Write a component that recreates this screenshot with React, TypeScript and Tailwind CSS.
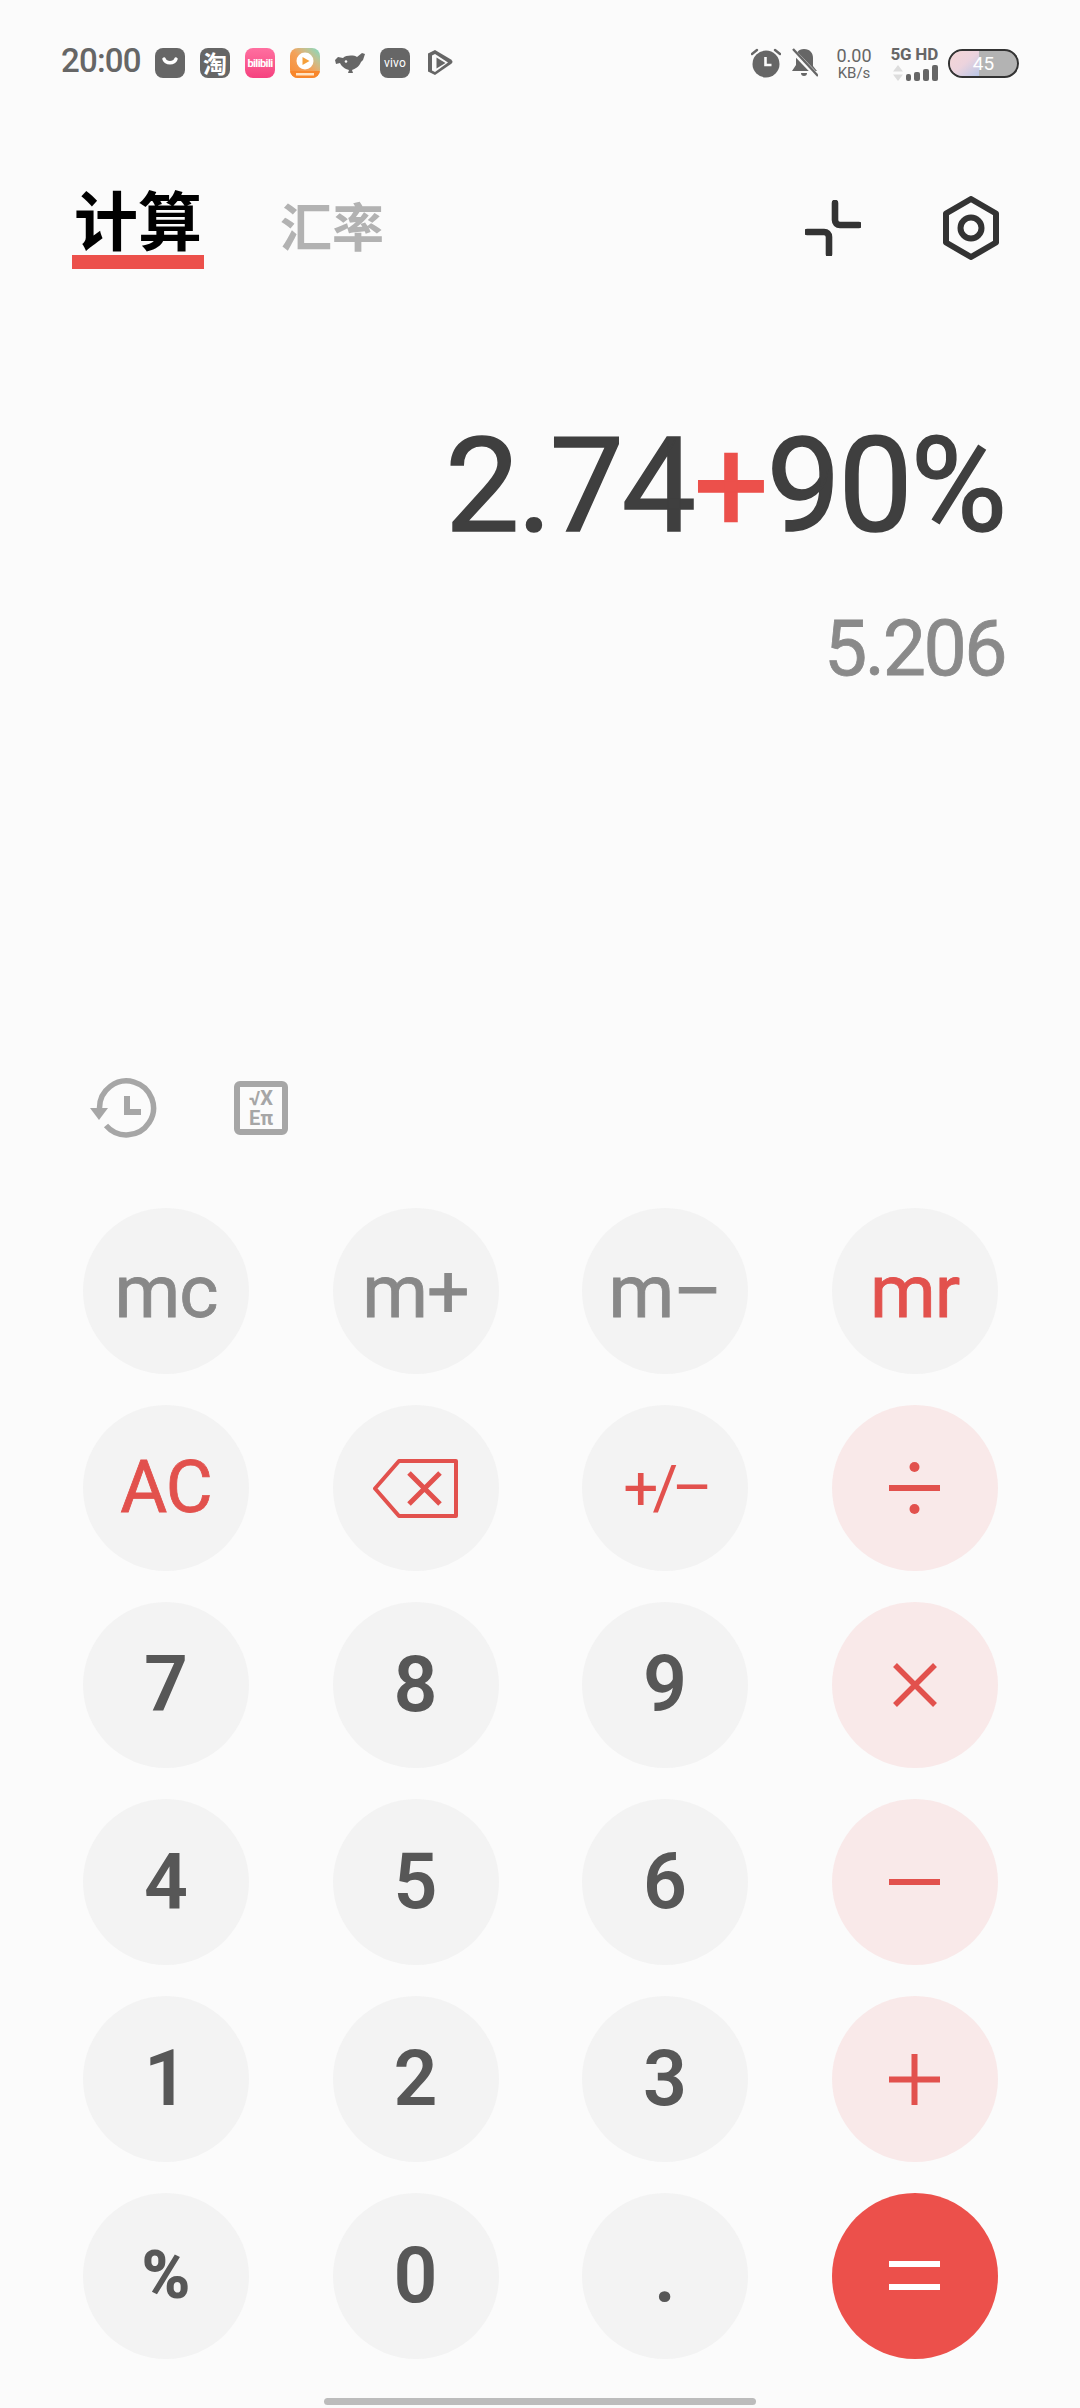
import React from 'react';

const SANS = 'font-["Roboto","Liberation_Sans",sans-serif]';

const AppSquare: React.FC<{ children?: React.ReactNode; className?: string }> = ({ children, className = 'bg-[#666666]' }) => (
  <div className={`relative w-[30px] h-[30px] rounded-[8px] flex items-center justify-center overflow-hidden text-white ${className}`}>
    {children}
  </div>
);

const StatusLeft = () => (
  <div className="flex items-center">
    <div className="w-[94px] shrink-0 -mt-[4px]">
      <span className={`${SANS} text-[33px] leading-[40px] font-medium text-[#666666] whitespace-nowrap tracking-[-0.8px]`}>20:00</span>
    </div>
    <div className="flex items-center gap-[15px]">
      <AppSquare>
        <svg width="30" height="30" viewBox="0 0 30 30">
          <path d="M9 11c2 5 10 5 12 0" fill="none" stroke="#fff" strokeWidth="3.4" strokeLinecap="round" />
        </svg>
      </AppSquare>
      <AppSquare>
        <span className='font-["Noto_Sans_CJK_SC",sans-serif] text-[24px] leading-none font-bold'>淘</span>
      </AppSquare>
      <AppSquare className="bg-gradient-to-b from-[#ff6fa0] to-[#f5407f]">
        <span className={`${SANS} text-[11px] leading-none font-bold tracking-[-0.6px]`}>bilibili</span>
      </AppSquare>
      <AppSquare className="bg-gradient-to-tr from-[#f98a2e] via-[#f3a25a] to-[#6fdcc4]">
        <svg width="30" height="30" viewBox="0 0 30 30">
          <rect x="0" y="23" width="30" height="7" fill="#f8872c" />
          <circle cx="15" cy="13" r="8.5" fill="#fff" />
          <path d="M12.5 9l7 4-7 4z" fill="#f5a03c" />
          <rect x="6" y="25" width="18" height="2.5" fill="#ffe3c4" />
        </svg>
      </AppSquare>
      <svg width="30" height="30" viewBox="0 0 30 30">
        <path d="M0 12L3 9l5 1c3-3 11-3 14-1l5-4 3 1-2 6-2 2c-2 5-6 7-9 8l1 3h-5l1-3c-4-1-8-4-9-7l-4 1z" fill="#666666" />
        <circle cx="11" cy="13.500" r="1.3" fill="#fbfbfb" />
      </svg>
      <AppSquare>
        <span className={`${SANS} text-[12px] leading-none font-normal tracking-[0.2px]`}>vivo</span>
      </AppSquare>
      <svg width="30" height="30" viewBox="0 0 30 30">
        <path d="M3 5.5 10 2l16 9.5c2 1.5 2 3 0 4.500L10 27l-7-3.5z" fill="#666666" />
        <path d="M7 7.5v15l3 1.5 13-9.5L10 6z" fill="#fbfbfb" />
        <path d="M11.5 9.5l9 5.5-9 5.500z" fill="#666666" />
      </svg>
    </div>
  </div>
);

const StatusRight = () => (
  <div className="flex items-center">
    <svg width="30" height="30" viewBox="0 0 30 30">
      <path d="M1 6l5-4M29 6l-5-4" stroke="#666666" strokeWidth="2.4" strokeLinecap="round" />
      <circle cx="15" cy="16" r="13.5" fill="#666666" />
      <path d="M14.5 9v8h6" fill="none" stroke="#fbfbfb" strokeWidth="2.6" />
    </svg>
    <svg className="ml-[10px]" width="27" height="30" viewBox="0 0 27 30">
      <path d="M13 1c6 0 9 4 9 9v8l4 5H1l4-6v-7c0-5 2-9 8-9z" fill="#666666" />
      <path d="M10 25h6a3 3 0 0 1-6 0z" fill="#666666" />
      <path d="M1 2l25 26" stroke="#fbfbfb" strokeWidth="5" />
      <path d="M2 1l25 27" stroke="#666666" strokeWidth="2.4" />
    </svg>
    <div className={`${SANS} ml-[17px] w-[38px] flex flex-col items-center text-[#666666]`}>
      <span className="text-[18px] leading-[19px]">0.00</span>
      <span className="text-[15px] leading-[16px]">KB/s</span>
    </div>
    <div className="ml-[17px] w-[48px] flex flex-col items-end">
      <span className={`${SANS} text-[17px] leading-[16px] font-bold text-[#666666] whitespace-nowrap tracking-[-0.2px]`}>5G HD</span>
      <div className="mt-[3px] flex items-end gap-[3px]">
        <svg width="10" height="16" viewBox="0 0 10 16">
          <path d="M5 0l5 6.5H0zM5 16l5-6.5H0z" fill="#dddddd" />
        </svg>
        <div className="w-[5px] h-[7px] rounded-[2px] bg-[#666666]" />
        <div className="w-[6px] h-[9px] rounded-[2px] bg-[#666666]" />
        <div className="w-[6px] h-[12px] rounded-[2px] bg-[#666666]" />
        <div className="w-[6px] h-[16px] rounded-[2px] bg-[#666666]" />
      </div>
    </div>
    <div className="relative ml-[10px] w-[71px] h-[29px] rounded-full border-[2.5px] border-[#333333] overflow-hidden flex bg-[#b3b3b3]">
      <div className="w-[29px] h-full bg-gradient-to-br from-[#f5d6d6] via-[#ecd3dd] to-[#b9c6e6]" />
      <span className={`${SANS} absolute inset-0 flex items-center justify-center text-[19px] leading-none text-white`}>45</span>
    </div>
  </div>
);

const Tabs = () => (
  <div className="flex items-start pl-[72px] pr-[81px] h-[143px]">
    <div className="w-[132px] pt-[60px] flex flex-col items-center">
      <span className='font-["Noto_Sans_CJK_SC",sans-serif] text-[64px] leading-[62px] font-bold text-black'>计算</span>
      <div className="mt-[7px] w-[132px] h-[14px] bg-[#ec504b]" />
    </div>
    <span className='ml-[76px] mt-[73px] font-["Noto_Sans_CJK_SC",sans-serif] text-[52px] leading-[52px] font-bold text-[#b2b2b2]'>汇率</span>
    <div className="ml-auto mt-[70px] flex items-center gap-[82px]">
      <svg width="56" height="56" viewBox="0 0 56 56">
        <path d="M30 3v17c0 3 2 5 5 5h19" fill="none" stroke="#333333" strokeWidth="6.6" strokeLinecap="round" />
        <path d="M2 32h17c3 0 5 2 5 5v17" fill="none" stroke="#333333" strokeWidth="6.6" strokeLinecap="round" />
      </svg>
      <svg width="56" height="64" viewBox="0 0 56 64">
        <path d="M28 3l25 14.5v29L28 61 3 46.500v-29z" fill="none" stroke="#333333" strokeWidth="6" strokeLinejoin="round" />
        <circle cx="28" cy="32" r="10.500" fill="none" stroke="#333333" strokeWidth="6" />
      </svg>
    </div>
  </div>
);

const Display = () => (
  <div className={`${SANS} flex flex-col items-end pr-[75px]`}>
    <div className="mt-[151px] text-[132px] leading-[132px] text-[#3f3f3f] [-webkit-text-stroke:1.6px_currentColor] whitespace-nowrap tracking-[-2.2px]">
      2.74<span className="text-[#ec504b]">+</span>90%
    </div>
    <div className="mt-[59px] text-[77px] leading-[77px] text-[#8a8a8a] [-webkit-text-stroke:0.8px_currentColor] whitespace-nowrap tracking-[-2.5px]">5.206</div>
  </div>
);

const Tools = () => (
  <div className="flex items-center pl-[90px]">
    <svg width="67" height="60" viewBox="0 0 67 60">
      <path d="M9.500 30A27 27 0 1 1 16 47.500" fill="none" stroke="#a6a6a6" strokeWidth="5.500" />
      <path d="M0 30h18L9 42z" fill="#a6a6a6" />
      <path d="M37 18v16h14" fill="none" stroke="#a6a6a6" strokeWidth="6" />
    </svg>
    <div className="ml-[77px] w-[54px] h-[54px] rounded-[6px] border-[6px] border-[#a6a6a6] flex flex-col items-center justify-center">
      <span className={`${SANS} text-[20px] leading-[20px] font-bold text-[#a6a6a6] whitespace-nowrap`}>√X</span>
      <span className={`${SANS} text-[20px] leading-[20px] font-bold text-[#a6a6a6] whitespace-nowrap`}>Eπ</span>
    </div>
  </div>
);

const RED = '#e2514d';

const Divide = () => (
  <svg width="51" height="56" viewBox="0 0 51 56">
    <rect x="0" y="25" width="51" height="6" fill={RED} />
    <circle cx="25.500" cy="7" r="5" fill={RED} />
    <circle cx="25.500" cy="49" r="5" fill={RED} />
  </svg>
);
const Times = () => (
  <svg width="46" height="46" viewBox="0 0 46 46">
    <path d="M3 3l40 40M43 3L3 43" stroke={RED} strokeWidth="5.500" />
  </svg>
);
const Minus = () => (
  <svg width="51" height="6" viewBox="0 0 51 6">
    <rect width="51" height="6" fill={RED} />
  </svg>
);
const Plus = () => (
  <svg width="51" height="51" viewBox="0 0 51 51">
    <path d="M0 25.500h51M25.500 0v51" stroke={RED} strokeWidth="6" />
  </svg>
);
const Equals = () => (
  <svg width="51" height="30" viewBox="0 0 51 30">
    <rect y="0" width="51" height="6" fill="#fff" />
    <rect y="23" width="51" height="6" fill="#fff" />
  </svg>
);
const Backspace = () => (
  <svg width="85" height="59" viewBox="0 0 85 59">
    <path d="M26 2h57v55H26L2 29.500z" fill="none" stroke={RED} strokeWidth="4" strokeLinejoin="round" />
    <path d="M36 14l31 31M67 14L36 45" stroke={RED} strokeWidth="5" />
  </svg>
);

type KeyDef = { label?: string; icon?: React.ReactNode; tone: string; text: string };

const memo = 'bg-[#f3f3f3] text-[75px] font-normal tracking-[-1px] [-webkit-text-stroke:0.8px_currentColor]';
const num = 'bg-[#f3f3f3] text-[77px] font-semibold';

const keys: KeyDef[] = [
  { label: 'mc', tone: memo, text: 'text-[#888888]' },
  { label: 'm+', tone: memo, text: 'text-[#888888]' },
  { label: 'm–', tone: memo, text: 'text-[#888888]' },
  { label: 'mr', tone: memo, text: 'text-[#e2514d]' },
  { label: 'AC', tone: 'bg-[#f3f3f3] text-[72px] font-normal tracking-[-1px] [-webkit-text-stroke:0.8px_currentColor]', text: 'text-[#e2514d]' },
  { icon: <Backspace />, tone: 'bg-[#f3f3f3]', text: '' },
  { label: '+/–', tone: 'bg-[#f3f3f3] text-[62px] font-normal tracking-[-6px]', text: 'text-[#e2514d]' },
  { icon: <Divide />, tone: 'bg-[#f9e9e9]', text: '' },
  { label: '7', tone: num, text: 'text-[#575757]' },
  { label: '8', tone: num, text: 'text-[#575757]' },
  { label: '9', tone: num, text: 'text-[#575757]' },
  { icon: <Times />, tone: 'bg-[#f9e9e9]', text: '' },
  { label: '4', tone: num, text: 'text-[#575757]' },
  { label: '5', tone: num, text: 'text-[#575757]' },
  { label: '6', tone: num, text: 'text-[#575757]' },
  { icon: <Minus />, tone: 'bg-[#f9e9e9]', text: '' },
  { label: '1', tone: num, text: 'text-[#575757]' },
  { label: '2', tone: num, text: 'text-[#575757]' },
  { label: '3', tone: num, text: 'text-[#575757]' },
  { icon: <Plus />, tone: 'bg-[#f9e9e9]', text: '' },
  { label: '%', tone: 'bg-[#f3f3f3] text-[66px] font-black', text: 'text-[#575757]' },
  { label: '0', tone: num, text: 'text-[#575757]' },
  { label: '.', tone: num, text: 'text-[#575757]' },
  { icon: <Equals />, tone: 'bg-[#ec504b]', text: '' },
];

const Keypad = () => (
  <div className="mt-[70px] ml-[83px] grid grid-cols-[repeat(4,166px)] gap-x-[83.5px] gap-y-[31px]">
    {keys.map((k, i) => (
      <button key={i} className={`${SANS} w-[166px] h-[166px] rounded-full flex items-center justify-center leading-none ${k.tone} ${k.text}`}>
        {k.icon ?? k.label}
      </button>
    ))}
  </div>
);

export default function App() {
  return (
    <div className="w-[1080px] h-[2408px] bg-[#fbfbfb] flex flex-col overflow-hidden">
      <div className="h-[126px] px-[61px] flex items-center justify-between">
        <StatusLeft />
        <StatusRight />
      </div>
      <Tabs />
      <Display />
      <div className="mt-[390px]">
        <Tools />
      </div>
      <Keypad />
      <div className="mt-[39px] mx-auto w-[432px] h-[7px] rounded-full bg-[#bcbcbc]" />
    </div>
  );
}
